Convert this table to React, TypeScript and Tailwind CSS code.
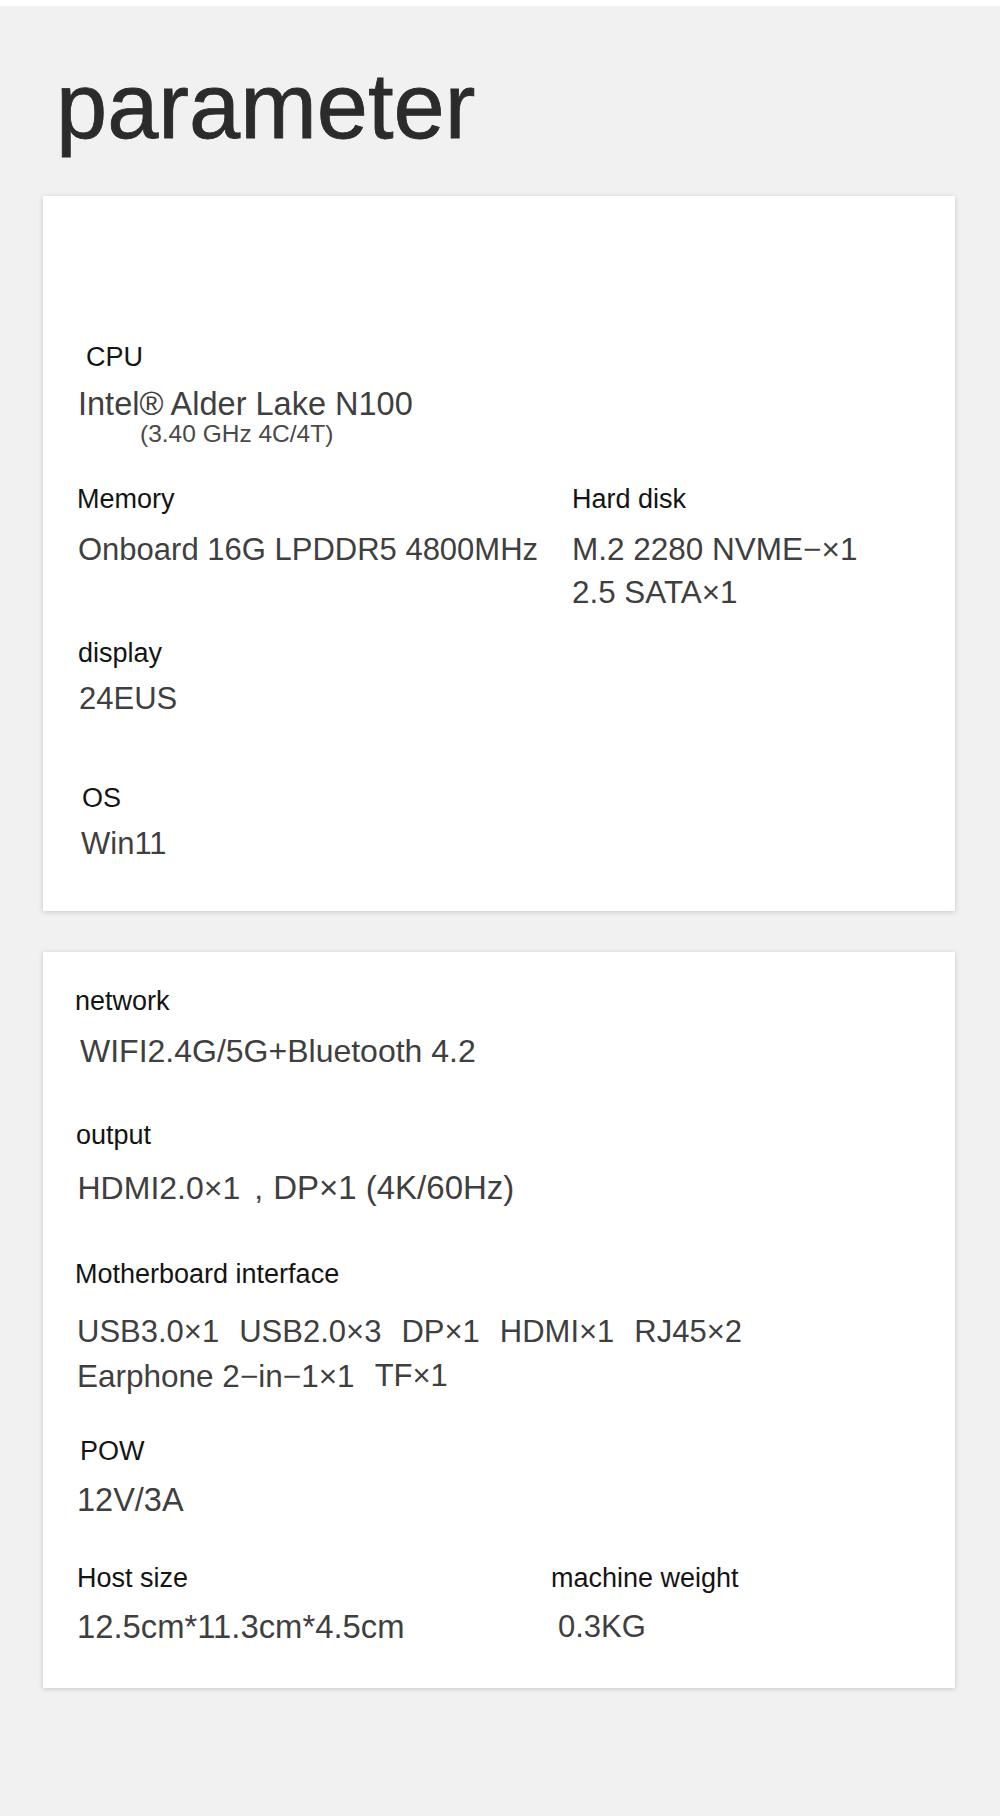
const font = { fontFamily: '"Liberation Sans", Arial, "Noto Sans CJK SC", sans-serif' };

const Label = ({ children, className = "" }: { children: React.ReactNode; className?: string }) => (
  <p className={`text-[27px] leading-[30px] text-[#141414] ${className}`}>{children}</p>
);

const Value = ({ children, className = "" }: { children: React.ReactNode; className?: string }) => (
  <p className={`text-[31px] leading-[36px] text-[#3f3f3f] ${className}`}>{children}</p>
);

export default function App() {
  return (
    <div className="min-h-[1816px] bg-[#f1f1f1]" style={font}>
      <div className="h-[6px] bg-white" />

      <h1 className="ml-[56px] mt-[54px] text-[92px] leading-[92px] text-[#2b2b2b] [-webkit-text-stroke:0.8px_#2b2b2b]">
        parameter
      </h1>

      {/* card 1 */}
      <section className="ml-[43px] mt-[44px] h-[715px] w-[912px] bg-white pl-[33px] pt-[146px] shadow-[0_1px_5px_rgba(0,0,0,0.18)]">
        <Label className="ml-[10px] text-[25px]">CPU</Label>
        <Value className="ml-[2px] mt-[14px] text-[32.5px]">Intel® Alder Lake N100</Value>
        <p className="ml-[64px] text-[24.5px] leading-[24px] text-[#4a4a4a]">(3.40 GHz 4C/4T)</p>

        <div className="mt-[38px] grid grid-cols-[496px_1fr]">
          <div>
            <Label className="ml-[1px] text-[26.5px]">Memory</Label>
            <Value className="ml-[2px] mt-[14px] text-[31.5px] leading-[43px]">Onboard 16G LPDDR5 4800MHz</Value>
          </div>
          <div>
            <Label className="text-[26.8px]">Hard disk</Label>
            <div className="mt-[14px] text-[31.5px] leading-[43px] text-[#3f3f3f]">
              <p>M.2 2280 NVME−×1</p>
              <p className="text-[31.4px]">2.5 SATA×1</p>
            </div>
          </div>
        </div>

        <Label className="ml-[2px] mt-[24px]">display</Label>
        <Value className="ml-[3px] mt-[13px] text-[30px]">24EUS</Value>

        <Label className="ml-[6px] mt-[66px] text-[24.5px]">OS</Label>
        <Value className="ml-[5px] mt-[13px] text-[30.8px]">Win11</Value>
      </section>

      {/* card 2 */}
      <section className="ml-[43px] mt-[41px] h-[736px] w-[912px] bg-white pl-[33px] pt-[34px] shadow-[0_1px_5px_rgba(0,0,0,0.18)]">
        <Label className="-ml-[1px]">network</Label>
        <Value className="ml-[4px] mt-[17px] text-[32px]">WIFI2.4G/5G+Bluetooth 4.2</Value>

        <Label className="mt-[51px]">output</Label>
        <Value className="ml-[1.5px] mt-[20px] text-[32px]">
          HDMI2.0×1<span className="ml-[14px]">,</span>
          <span className="ml-[10px] text-[33px]">DP×1 (4K/60Hz)</span>
        </Value>

        <Label className="-ml-[1px] mt-[53px] text-[27.9px]">Motherboard interface</Label>
        <div className="ml-[1px] mt-[21px] leading-[44px] text-[#3f3f3f]">
          <div className="flex gap-[20px] text-[31px]">
            <span>USB3.0×1</span>
            <span>USB2.0×3</span>
            <span>DP×1</span>
            <span>HDMI×1</span>
            <span>RJ45×2</span>
          </div>
          <div className="flex gap-[20px] text-[31.5px]">
            <span>Earphone 2−in−1×1</span>
            <span className="text-[31px]">TF×1</span>
          </div>
        </div>

        <Label className="ml-[4px] mt-[38px] text-[24px]">POW</Label>
        <Value className="ml-[1px] mt-[16px] text-[32.5px]">12V/3A</Value>

        <div className="mt-[45px] grid grid-cols-[475px_1fr]">
          <div>
            <Label className="ml-[1px]">Host size</Label>
            <Value className="ml-[1px] mt-[16px] text-[32.8px]">12.5cm*11.3cm*4.5cm</Value>
          </div>
          <div>
            <Label>machine weight</Label>
            <Value className="ml-[7px] mt-[16px]">0.3KG</Value>
          </div>
        </div>
      </section>
    </div>
  );
}
